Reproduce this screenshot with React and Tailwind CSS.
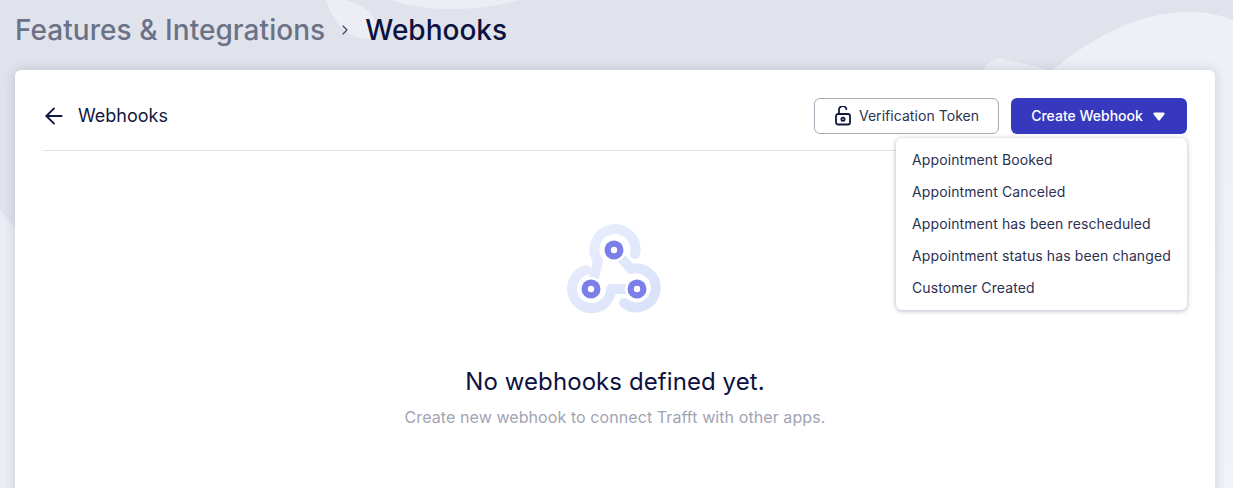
import React from 'react';
import { ArrowLeft, ChevronRight } from 'lucide-react';

const events = [
    'Appointment Booked',
    'Appointment Canceled',
    'Appointment has been rescheduled',
    'Appointment status has been changed',
    'Customer Created',
];

const BackgroundShapes = () => (
    <svg className="absolute inset-0 h-full w-full" viewBox="0 0 1233 488" preserveAspectRatio="none" aria-hidden="true">
        <defs>
            <linearGradient id="page-fade" x1="0" y1="0" x2="0" y2="1">
                <stop offset="0" stopColor="#eef0f5" />
                <stop offset="1" stopColor="#f1f3f8" />
            </linearGradient>
        </defs>
        <path d="M326 0 C332 20 345 38 368 39 C375 39 378 34 376 24 C373 12 362 4 345 0 Z" fill="#eceef3" />
        <path d="M390 0 C420 10 470 14 520 0 Z" fill="#eceef3" />
        <path d="M1050 72 C1095 35 1140 12 1190 12 C1205 12 1220 15 1233 20 L1233 488 L1050 488 Z" fill="url(#page-fade)" />
        <path d="M983 72 C986 62 995 57 1003 59 C1018 63 1035 64 1050 72 Z" fill="#eceef3" />
        <path d="M0 210 L20 234 L20 488 L0 488 Z" fill="#eaedf3" />
    </svg>
);

const WebhookIcon = () => (
    <svg width="130" height="120" viewBox="0 0 130 120" fill="none" aria-hidden="true">
        <defs>
            <linearGradient id="hook-line" x1="20" y1="15" x2="100" y2="100" gradientUnits="userSpaceOnUse">
                <stop offset="0" stopColor="#ebeffc" />
                <stop offset="1" stopColor="#d9e2fa" />
            </linearGradient>
        </defs>
        <g stroke="url(#hook-line)" strokeWidth="10" strokeLinecap="round" strokeLinejoin="round">
            <path d="M85 43 A20.5 20.5 0 1 0 48 50 L41 78" />
            <path d="M36 59 A19.5 19.5 0 1 0 61 78 L87 78" />
            <path d="M74 92 A19.5 19.5 0 1 0 81 58 L64 39" />
        </g>
        <g fill="#ffffff">
            <circle cx="64" cy="39" r="12" />
            <circle cx="41" cy="78" r="12" />
            <circle cx="87" cy="78" r="12" />
        </g>
        <g fill="#7b7fe8">
            <circle cx="64" cy="39" r="9.5" />
            <circle cx="41" cy="78" r="9.5" />
            <circle cx="87" cy="78" r="9.5" />
        </g>
        <g fill="#ffffff">
            <circle cx="64" cy="39" r="3.2" />
            <circle cx="41" cy="78" r="3.2" />
            <circle cx="87" cy="78" r="3.2" />
        </g>
    </svg>
);

const LockIcon = () => (
    <svg width="18" height="20" viewBox="0 0 18 20" fill="none" stroke="#12173f" strokeWidth="1.8" strokeLinecap="round" strokeLinejoin="round" aria-hidden="true">
        <rect x="2" y="8" width="14" height="10.5" rx="2" />
        <circle cx="9" cy="13.2" r="1.6" />
        <path d="M5 8 V4.5 A3.7 3.7 0 0 1 12.4 3.2" />
    </svg>
);

export default function App() {
    return (
        <div className="relative h-screen overflow-hidden bg-[#e0e3eb] pl-[15px] pr-[18px] font-['Inter',sans-serif]">
            <BackgroundShapes />

            <div className="relative flex h-[70px] items-center pb-[10px]">
                <span className="text-[28px] font-medium tracking-[0.05px] text-[#6b7288]">Features &amp; Integrations</span>
                <ChevronRight className="mx-[12px] text-[#3c4160]" size={16} strokeWidth={1.75} />
                <span className="text-[28px] font-medium text-[#0d1240]">Webhooks</span>
            </div>

            <div className="relative h-[500px] rounded-md bg-white px-7 pt-7 shadow-[0_0_12px_rgba(40,45,90,0.18)]">
                <div className="flex h-[53px] items-start justify-between border-b border-[#e2e4e9]">
                    <div className="flex h-9 items-center gap-[11px]">
                        <ArrowLeft className="-ml-[2px] text-[#12173f]" size={26} strokeWidth={1.75} />
                        <span className="text-lg text-[#12173f]">Webhooks</span>
                    </div>
                    <div className="flex gap-3">
                        <button className="flex h-9 w-[185px] items-center justify-center gap-[7px] rounded-md border border-[#a9abb8] bg-white text-sm tracking-[0.05px] text-[#2c3350]">
                            <LockIcon />
                            Verification Token
                        </button>
                        <button className="flex h-9 w-[176px] items-center justify-center gap-[10px] rounded-md bg-[#3639bd] pr-[2px] text-sm font-medium text-white">
                            Create Webhook
                            <svg width="12" height="9" viewBox="0 0 12 9" fill="#ffffff" aria-hidden="true">
                                <path d="M1.6 0.5 H10.4 C11.5 0.5 12 1.7 11.3 2.6 L7 8 C6.5 8.7 5.5 8.7 5 8 L0.7 2.6 C0 1.7 0.5 0.5 1.6 0.5 Z" />
                            </svg>
                        </button>
                    </div>
                </div>

                <div className="absolute right-7 top-[68px] z-10 w-[291px] rounded-md bg-white py-[6px] shadow-[0_1px_5px_rgba(40,45,90,0.35)]">
                    {events.map((name) => (
                        <div key={name} className="flex h-8 items-center whitespace-nowrap px-4 text-sm tracking-[0.11px] text-[#2c3152]">
                            {name}
                        </div>
                    ))}
                </div>

                <div className="flex flex-col items-center pt-[60px]">
                    <WebhookIcon />
                    <h2 className="mt-[35px] text-2xl leading-8 tracking-[0.08px] text-[#0d1240]">No webhooks defined yet.</h2>
                    <p className="mt-[7px] text-base tracking-[0.08px] text-[#a1a4b2]">Create new webhook to connect Trafft with other apps.</p>
                </div>
            </div>
        </div>
    );
}
